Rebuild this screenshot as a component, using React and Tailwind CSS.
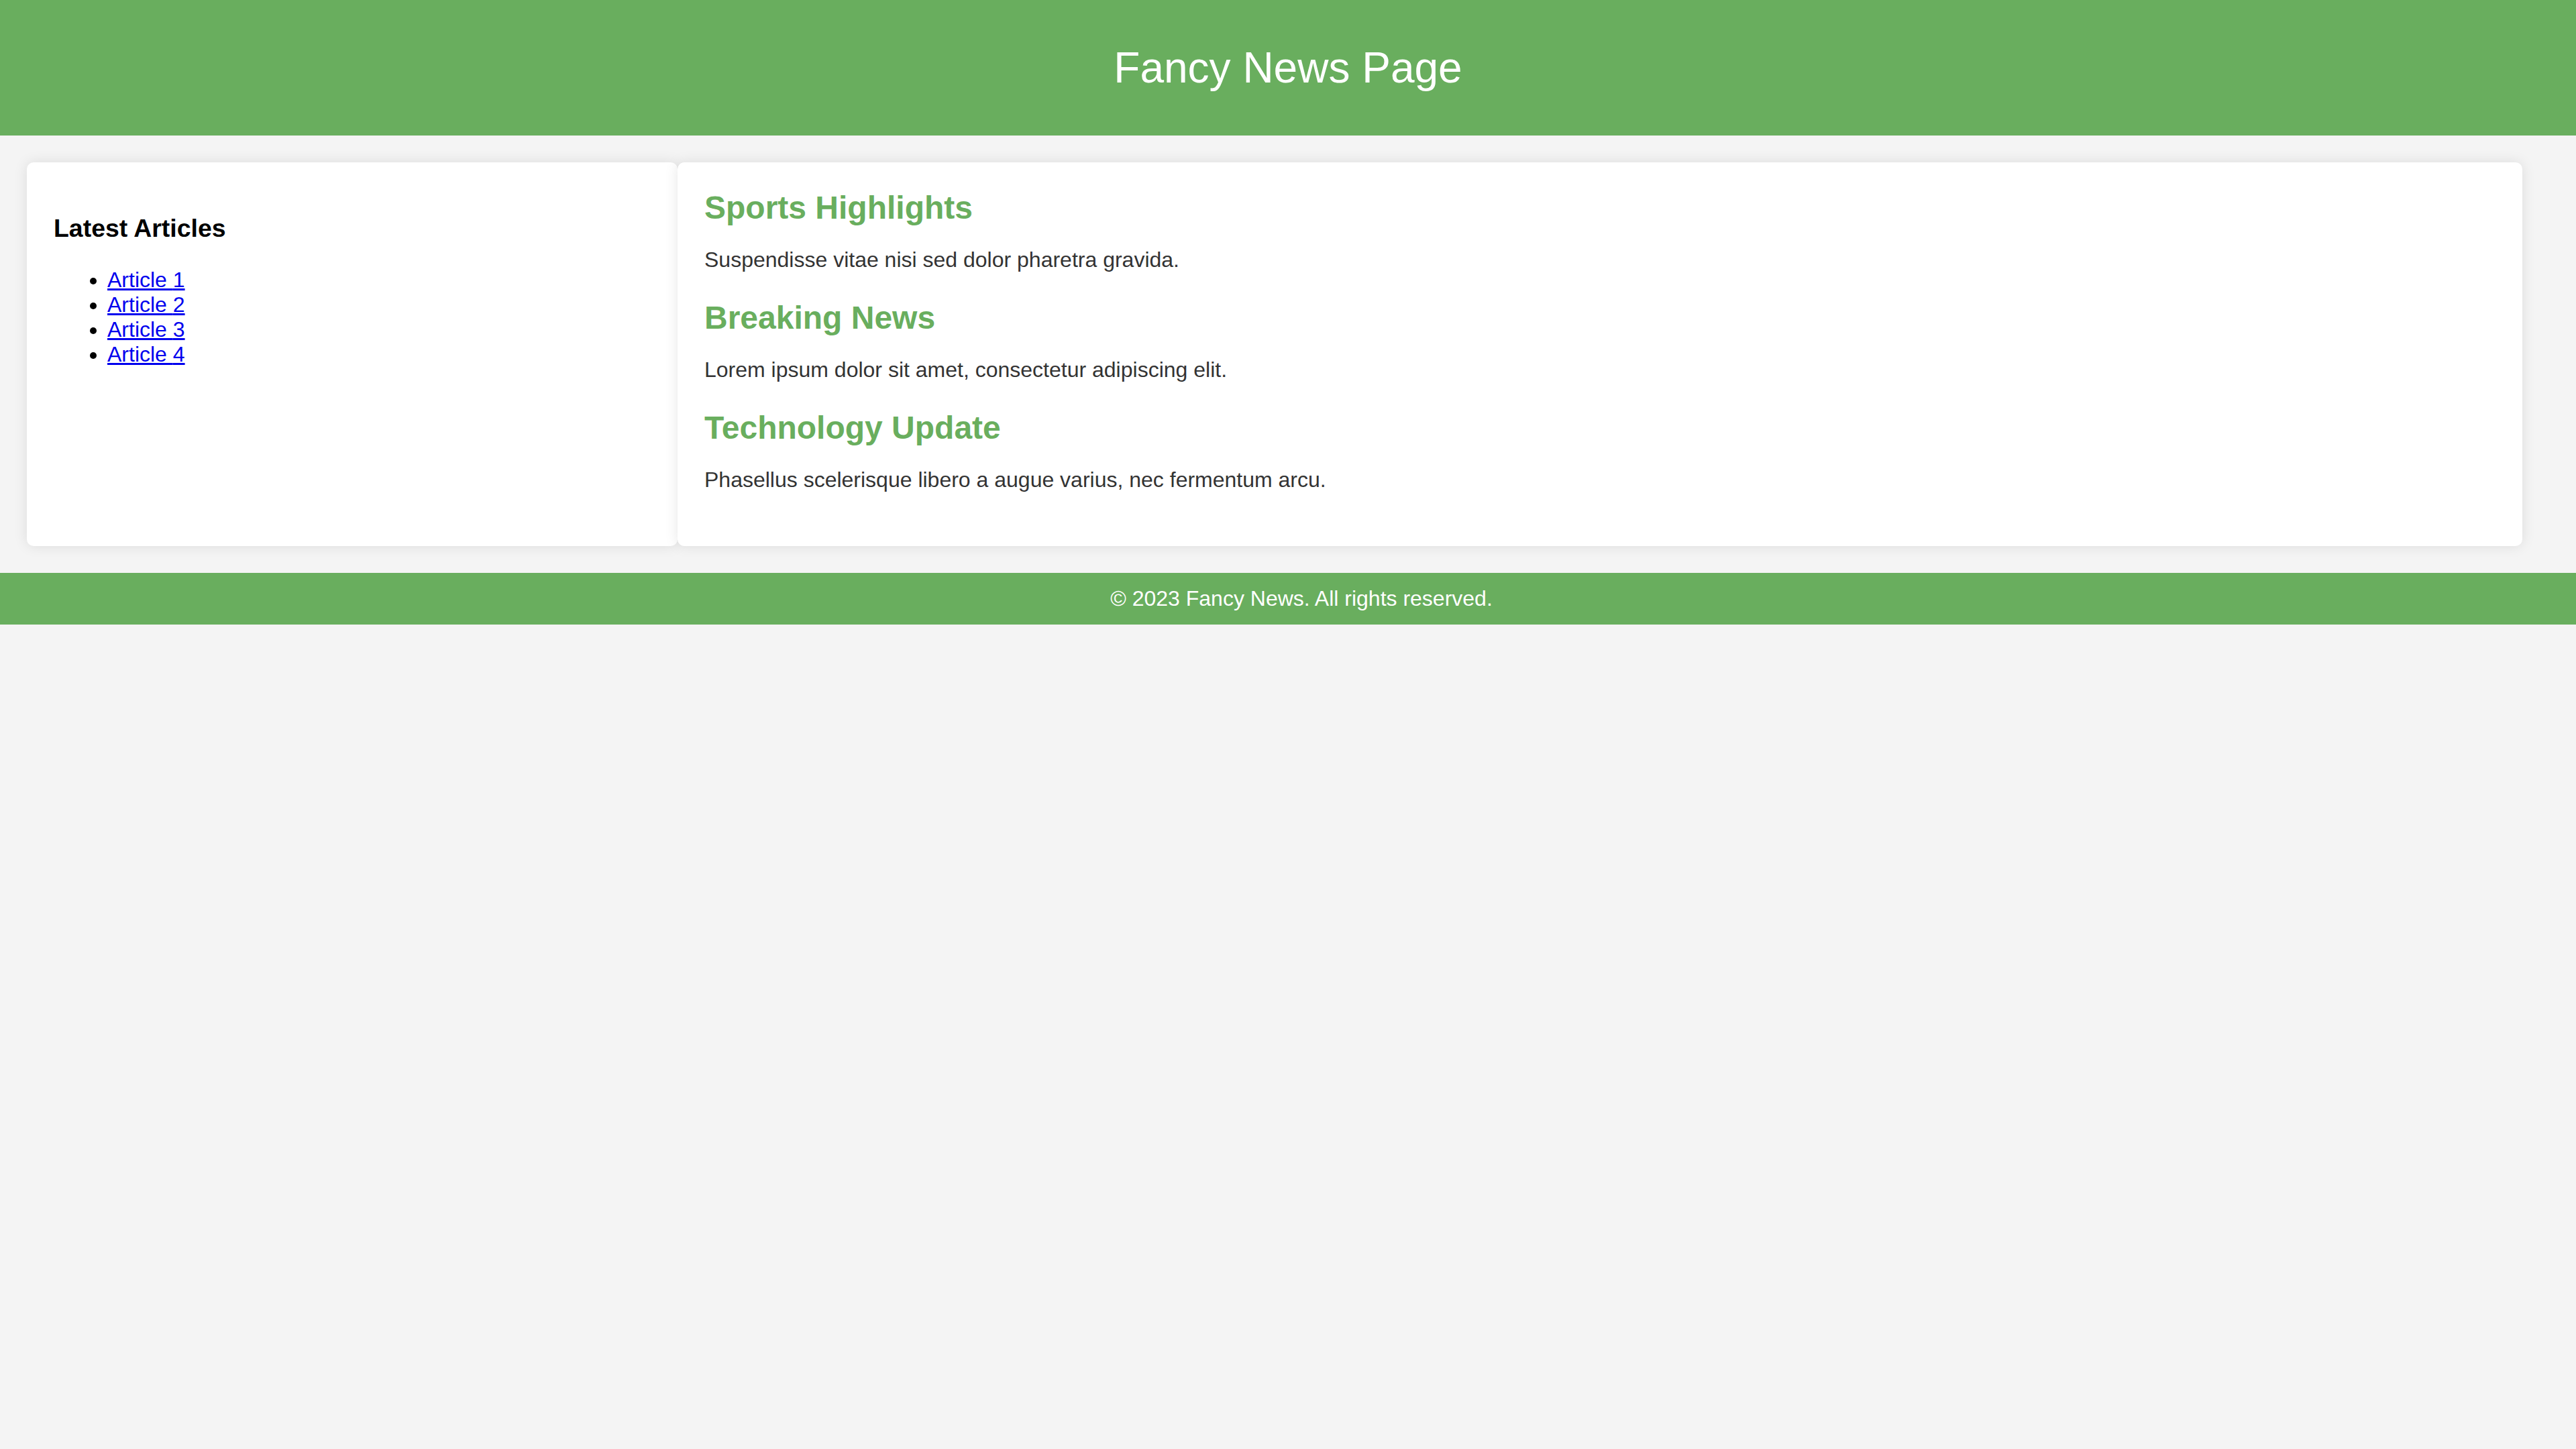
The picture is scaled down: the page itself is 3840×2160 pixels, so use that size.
export default function App() {
  const articles = [
    { title: "Sports Highlights", text: "Suspendisse vitae nisi sed dolor pharetra gravida." },
    { title: "Breaking News", text: "Lorem ipsum dolor sit amet, consectetur adipiscing elit." },
    { title: "Technology Update", text: "Phasellus scelerisque libero a augue varius, nec fermentum arcu." },
  ];
  return (
    <div className="min-h-[2160px] w-full bg-[#f4f4f4] text-black font-['Liberation_Sans',Arial,sans-serif]">
      <header className="bg-[#69ae5e] py-[64px] text-center">
        <h1 className="m-0 text-[64px] font-normal leading-[normal] text-white">Fancy News Page</h1>
      </header>
      <div className="flex pt-[40px] pb-[40px] pl-[40px] pr-[80px]">
        <aside className="flex-1 bg-white rounded-[10px] shadow-[0_0_20px_rgba(0,0,0,0.1)] p-[40px]">
          <h3 className="mt-[37px] mb-[37px] text-[37.44px] font-bold leading-[normal] text-black">Latest Articles</h3>
          <ul className="m-0 pl-[80px] list-disc text-[32px] leading-[normal]">
            {[1, 2, 3, 4].map((n) => (
              <li key={n}>
                <a href="#" className="text-[#0000ee] underline">Article {n}</a>
              </li>
            ))}
          </ul>
        </aside>
        <main className="flex-[3] bg-white rounded-[10px] shadow-[0_0_20px_rgba(0,0,0,0.1)] pt-[40px] pb-[80px] px-[40px] flex flex-col gap-[40px]">
          {articles.map((a) => (
            <article key={a.title}>
              <h2 className="m-0 text-[48px] font-bold leading-[normal] text-[#69ae5e]">{a.title}</h2>
              <p className="mt-[32px] mb-0 text-[32px] leading-[normal] text-[#333333]">{a.text}</p>
            </article>
          ))}
        </main>
      </div>
      <footer className="bg-[#69ae5e] py-[20px] pl-[40px] text-center text-white text-[32px] leading-[normal]">
        © 2023 Fancy News. All rights reserved.
      </footer>
    </div>
  );
}
